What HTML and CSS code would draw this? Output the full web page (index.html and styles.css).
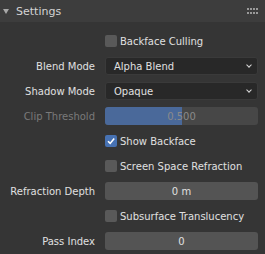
FILE: index.html
```html
<!DOCTYPE html>
<html lang="en">
<head>
    <meta charset="UTF-8">
    <meta name="viewport" content="width=device-width, initial-scale=1.0">
    <title>Settings</title>
    <link rel="stylesheet" href="styles.css">
</head>
<body>
    <div class="panel">
        <div class="panel-header">
            <span class="arrow"></span>
            <span class="title">Settings</span>
            <svg class="grip" width="11" height="7" viewBox="0 0 11 7">
                <g fill="#9a9a9a">
                    <rect x="0" y="0" width="2" height="2"/><rect x="3" y="0" width="2" height="2"/>
                    <rect x="6" y="0" width="2" height="2"/><rect x="9" y="0" width="2" height="2"/>
                    <rect x="0" y="4" width="2" height="2"/><rect x="3" y="4" width="2" height="2"/>
                    <rect x="6" y="4" width="2" height="2"/><rect x="9" y="4" width="2" height="2"/>
                </g>
            </svg>
        </div>

        <div class="panel-body">
            <div class="row">
                <div class="label"></div>
                <label class="check"><span class="box"></span>Backface Culling</label>
            </div>
            <div class="row">
                <div class="label">Blend Mode</div>
                <div class="menu">Alpha Blend<span class="chevron"></span></div>
            </div>
            <div class="row">
                <div class="label">Shadow Mode</div>
                <div class="menu">Opaque<span class="chevron"></span></div>
            </div>
            <div class="row disabled">
                <div class="label">Clip Threshold</div>
                <div class="slider"><div class="fill" style="width: 50%"></div><span class="value">0.500</span></div>
            </div>
            <div class="row">
                <div class="label"></div>
                <label class="check"><span class="box checked"><svg width="10" height="10" viewBox="0 0 10 10"><path d="M2 5.2 L4.2 7.4 L8.2 2.6" fill="none" stroke="#fff" stroke-width="1.6"/></svg></span>Show Backface</label>
            </div>
            <div class="row">
                <div class="label"></div>
                <label class="check"><span class="box"></span>Screen Space Refraction</label>
            </div>
            <div class="row">
                <div class="label">Refraction Depth</div>
                <div class="number">0 m</div>
            </div>
            <div class="row">
                <div class="label"></div>
                <label class="check"><span class="box"></span>Subsurface Translucency</label>
            </div>
            <div class="row">
                <div class="label">Pass Index</div>
                <div class="number">0</div>
            </div>
        </div>
    </div>
</body>
</html>
```

FILE: styles.css
```css
body {
    margin: 0;
    padding: 0;
    background: #353535;
    font-family: "DejaVu Sans", sans-serif;
    font-size: 10px;
    color: #e0e0e0;
}
.panel {
    width: 265px;
    height: 254px;
    background: #353535;
}
.panel-header {
    height: 22px;
    background: #3d3d3d;
    display: flex;
    align-items: center;
    padding: 0 7px 0 3px;
    box-sizing: border-box;
}
.arrow {
    width: 0;
    height: 0;
    border-left: 3px solid transparent;
    border-right: 3px solid transparent;
    border-top: 5px solid #a8a8a8;
    margin-right: 7px;
}
.title {
    font-size: 11px;
    color: #d4d4d4;
    flex: 1;
}
.panel-body {
    padding: 10px 7px 4px 0;
}
.row {
    display: grid;
    grid-template-columns: 95px 1fr;
    column-gap: 10px;
    height: 18px;
    margin-bottom: 7px;
    align-items: center;
}
.row:last-child {
    margin-bottom: 0;
}
.label {
    text-align: right;
    color: #e0e0e0;
    white-space: nowrap;
}
.check {
    display: flex;
    align-items: center;
    color: #e0e0e0;
}
.box {
    width: 12px;
    height: 12px;
    border-radius: 2px;
    background: #595959;
    margin-right: 3px;
    display: flex;
    align-items: center;
    justify-content: center;
}
.box.checked {
    background: #4772b3;
}
.menu {
    height: 18px;
    box-sizing: border-box;
    background: #282828;
    border: 1px solid #3a3a3a;
    border-radius: 3px;
    display: flex;
    align-items: center;
    padding: 0 6px 0 8px;
    position: relative;
}
.chevron {
    margin-left: auto;
    width: 3px;
    height: 3px;
    border-right: 1.5px solid #d8d8d8;
    border-bottom: 1.5px solid #d8d8d8;
    transform: rotate(45deg);
    margin-top: -3px;
}
.number {
    height: 18px;
    background: #545454;
    border-radius: 3px;
    display: flex;
    align-items: center;
    justify-content: center;
}
.slider {
    height: 18px;
    background: #474747;
    border-radius: 3px;
    position: relative;
    overflow: hidden;
    display: flex;
    align-items: center;
    justify-content: center;
}
.slider .fill {
    position: absolute;
    left: 0;
    top: 0;
    bottom: 0;
    background: #4a699a;
}
.slider .value {
    position: relative;
    color: #8a8a8a;
}
.disabled .label {
    color: #7a7a7a;
}
```
